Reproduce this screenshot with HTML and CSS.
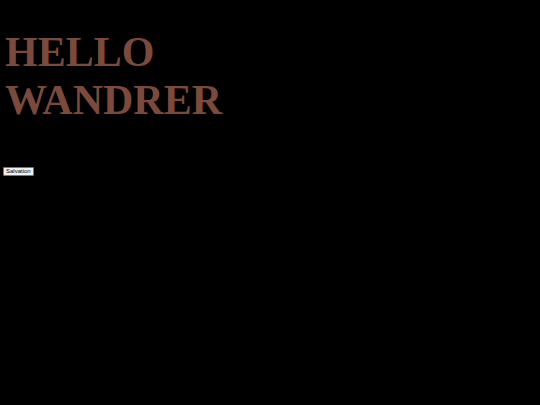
FILE: index.html
```html
<!DOCTYPE html>
<html lang="en">
<head>
    <meta charset="UTF-8">
    <meta name="viewport" content="width=device-width, initial-scale=1.0">
    <title>Hello Wandrer</title>
    <link rel="stylesheet" href="styles.css">
</head>
<body>

<header>
    <h1 class="greeting">HELLO<br>WANDRER</h1>
</header>

<section id="start">
    <button class="salvation-btn">Salvation</button>
</section>

</body>
</html>
```

FILE: styles.css
```css
body {
    margin: 0;
    padding: 0 3px;
    background-color: #000;
    font-family: "Liberation Sans", Arial, sans-serif;
}

.greeting {
    margin: 0;
    padding-top: 28px;
    padding-left: 2px;
    font-family: "Liberation Serif", "Times New Roman", serif;
    font-size: 42px;
    line-height: 48px;
    font-weight: bold;
    color: #7a4a3c;
}

#start {
    margin-top: 43px;
}

.salvation-btn {
    display: block;
    font-family: "Liberation Sans", Arial, sans-serif;
    font-size: 6px;
    line-height: 7px;
    padding: 0 2px;
    background-color: #f0f0f0;
    color: #000;
    border: 1px solid #767676;
    border-radius: 1px;
    cursor: pointer;
}
```
